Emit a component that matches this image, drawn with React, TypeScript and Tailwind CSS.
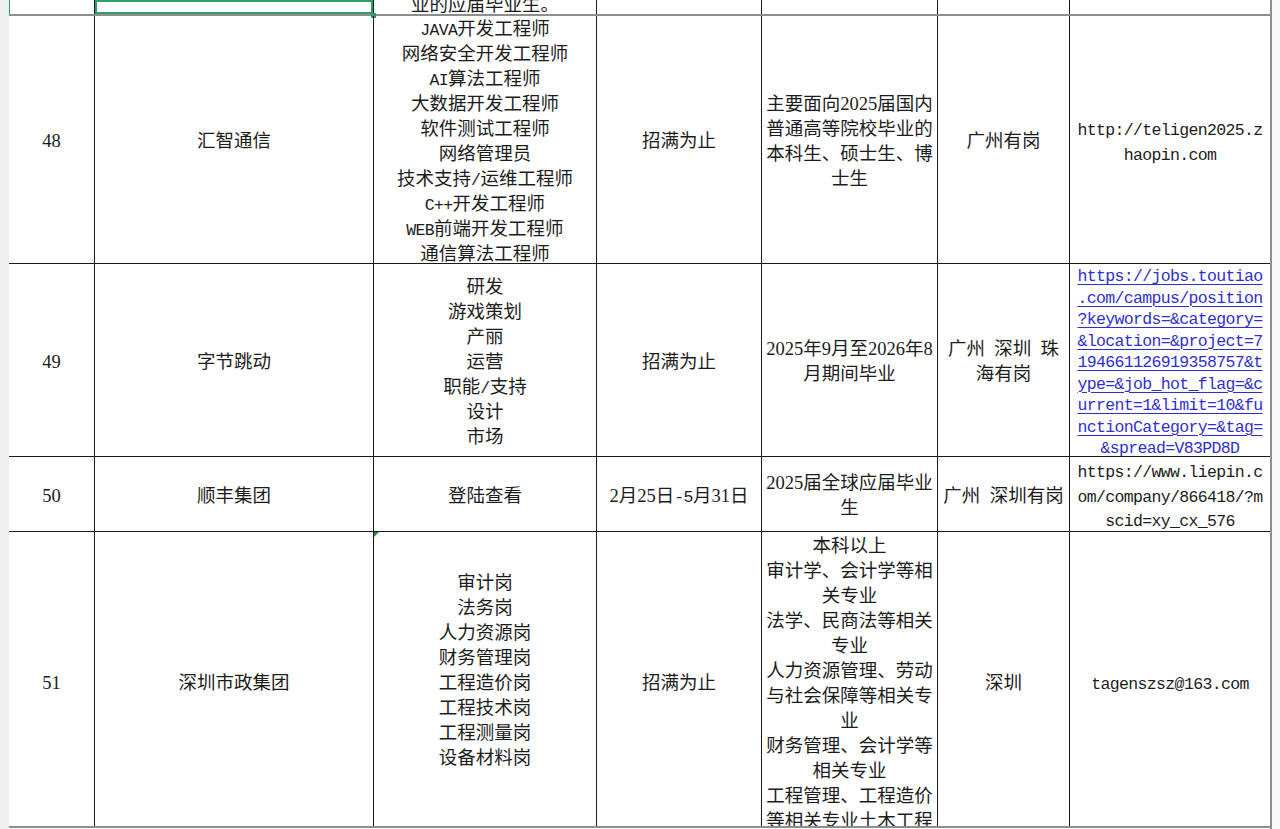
import React from 'react'

// split a line into CJK / ascii runs so half-width characters keep SimSun-like widths
function Run({ text }: { text: string }) {
  const parts = text.split(/([\x20-\x7e]+)/).filter(Boolean)
  return (
    <>
      {parts.map((p, i) => {
        if (/^[0-9]+$/.test(p)) {
          return (
            <span key={i} className="font-['Liberation_Serif',serif] text-[18.5px] leading-none">
              {p}
            </span>
          )
        }
        if (/^[\x20-\x7e]+$/.test(p)) {
          return (
            <span
              key={i}
              className="font-['Liberation_Mono',monospace] text-[16.5px] tracking-[-0.65px] leading-none whitespace-pre"
            >
              {p}
            </span>
          )
        }
        return <span key={i}>{p}</span>
      })}
    </>
  )
}

function Lines({ lines, h = 'h-[25px] leading-[25px]', link = false }: { lines: string[]; h?: string; link?: boolean }) {
  return (
    <div className="flex flex-col items-center text-center">
      {lines.map((l, i) => (
        <div
          key={i}
          className={
            link
              ? `${h} whitespace-nowrap text-[#2f2fd0] underline decoration-1 underline-offset-[3px]`
              : `${h} whitespace-nowrap`
          }
        >
          {l === '' ? '\u00a0' : <Run text={l} />}
        </div>
      ))}
    </div>
  )
}

const rowGrid =
  'grid grid-cols-[86px_279px_223px_165px_176px_132px_200px] font-["Noto_Sans_CJK_SC",sans-serif] text-[18.5px] text-[#1c1c1c]'

function C({ children, last = false, extra = '' }: { children?: React.ReactNode; last?: boolean; extra?: string }) {
  return (
    <div
      className={`relative flex items-center justify-center overflow-hidden ${
        last ? '' : 'border-r border-r-[#1a1a1a]'
      } ${extra}`}
    >
      {children}
    </div>
  )
}

export default function App() {
  return (
    <div className="flex h-[829px] w-[1280px] overflow-hidden bg-white">
      <div className="w-[9px] shrink-0 bg-[#efefef]" />

      <div className="flex w-[1263px] shrink-0 flex-col border-r-2 border-r-[#8e8e8e]">
        {/* previous row, mostly scrolled away */}
        <div className={`${rowGrid} h-[16px] border-b-2 border-b-[#8e8e8e]`}>
          <C extra="shadow-[inset_1px_0_0_#2e9e6c]" />
          <div className="relative border-r border-r-[#1a1a1a] shadow-[inset_0_0_0_2px_#2e9e6c]">
            <div className="absolute -bottom-[4px] -right-[3px] h-[5px] w-[5px] bg-[#2e9e6c]" />
          </div>
          <div className="flex items-end justify-center overflow-hidden border-r border-r-[#1a1a1a]">
            <div className="mb-[-2px] whitespace-nowrap leading-[25px]">业的应届毕业生。</div>
          </div>
          <C />
          <C />
          <C />
          <C last />
        </div>

        {/* 48 */}
        <div className={`${rowGrid} h-[248px] border-b border-b-[#1a1a1a]`}>
          <C><Lines lines={['48']} /></C>
          <C><Lines lines={['汇智通信']} /></C>
          <C>
            <Lines
              lines={[
                'JAVA开发工程师',
                '网络安全开发工程师',
                'AI算法工程师',
                '大数据开发工程师',
                '软件测试工程师',
                '网络管理员',
                '技术支持/运维工程师',
                'C++开发工程师',
                'WEB前端开发工程师',
                '通信算法工程师',
              ]}
            />
          </C>
          <C><Lines lines={['招满为止']} /></C>
          <C><Lines lines={['主要面向2025届国内', '普通高等院校毕业的', '本科生、硕士生、博', '士生']} /></C>
          <C><Lines lines={['广州有岗']} /></C>
          <C last><Lines lines={['http://teligen2025.z', 'haopin.com']} /></C>
        </div>

        {/* 49 */}
        <div className={`${rowGrid} h-[193px] border-b border-b-[#1a1a1a]`}>
          <C><Lines lines={['49']} /></C>
          <C><Lines lines={['字节跳动']} /></C>
          <C><Lines lines={['研发', '游戏策划', '产丽', '运营', '职能/支持', '设计', '市场']} /></C>
          <C><Lines lines={['招满为止']} /></C>
          <C><Lines lines={['2025年9月至2026年8', '月期间毕业']} /></C>
          <C><Lines lines={['广州 深圳 珠', '海有岗']} /></C>
          <C last>
            <Lines
              link
              h="h-[21.5px] leading-[21.5px]"
              lines={[
                'https://jobs.toutiao',
                '.com/campus/position',
                '?keywords=&category=',
                '&location=&project=7',
                '194661126919358757&t',
                'ype=&job_hot_flag=&c',
                'urrent=1&limit=10&fu',
                'nctionCategory=&tag=',
                '&spread=V83PD8D',
              ]}
            />
          </C>
        </div>

        {/* 50 */}
        <div className={`${rowGrid} h-[75px] border-b border-b-[#1a1a1a]`}>
          <C><Lines lines={['50']} /></C>
          <C><Lines lines={['顺丰集团']} /></C>
          <C><Lines lines={['登陆查看']} /></C>
          <C><Lines lines={['2月25日-5月31日']} /></C>
          <C><Lines lines={['2025届全球应届毕业', '生']} /></C>
          <C><Lines lines={['广州 深圳有岗']} /></C>
          <C last>
            <Lines
              h="h-[24.5px] leading-[24.5px]"
              lines={['https://www.liepin.c', 'om/company/866418/?m', 'scid=xy_cx_576']}
            />
          </C>
        </div>

        {/* 51 */}
        <div className={`${rowGrid} h-[296px] border-b-2 border-b-[#8e8e8e]`}>
          <C extra="pt-[5px]"><Lines lines={['51']} /></C>
          <C extra="pt-[5px]"><Lines lines={['深圳市政集团']} /></C>
          <C extra="pt-[5px]">
            <div className="absolute left-0 top-0 h-0 w-0 border-r-[5px] border-t-[5px] border-r-transparent border-t-[#1f8f2a]" />
            <Lines
              lines={['审计岗', '法务岗', '人力资源岗', '财务管理岗', '工程造价岗', '工程技术岗', '工程测量岗', '设备材料岗', '']}
            />
          </C>
          <C extra="pt-[5px]"><Lines lines={['招满为止']} /></C>
          <C extra="pt-[5px]">
            <Lines
              lines={[
                '本科以上',
                '审计学、会计学等相',
                '关专业',
                '法学、民商法等相关',
                '专业',
                '人力资源管理、劳动',
                '与社会保障等相关专',
                '业',
                '财务管理、会计学等',
                '相关专业',
                '工程管理、工程造价',
                '等相关专业土木工程',
              ]}
            />
          </C>
          <C extra="pt-[5px]"><Lines lines={['深圳']} /></C>
          <C last extra="pt-[5px]"><Lines lines={['tagenszsz@163.com']} /></C>
        </div>
      </div>

      <div className="flex-1 bg-[#f8f8f8]" />
    </div>
  )
}
